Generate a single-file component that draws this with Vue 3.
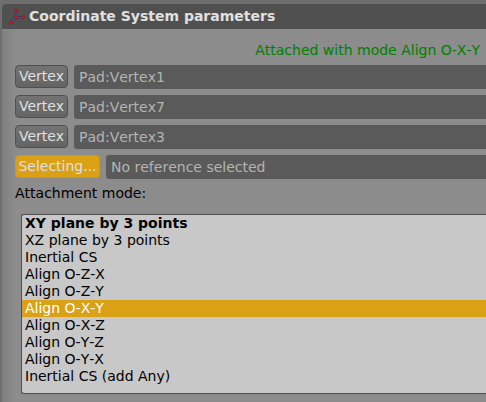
<script setup>
import { ref } from 'vue'

const references = [
  { button: 'Vertex', value: 'Pad:Vertex1' },
  { button: 'Vertex', value: 'Pad:Vertex7' },
  { button: 'Vertex', value: 'Pad:Vertex3' },
  { button: 'Selecting...', value: 'No reference selected', active: true },
]
const modes = [
  'XY plane by 3 points',
  'XZ plane by 3 points',
  'Inertial CS',
  'Align O-Z-X',
  'Align O-Z-Y',
  'Align O-X-Y',
  'Align O-X-Z',
  'Align O-Y-Z',
  'Align O-Y-X',
  'Inertial CS (add Any)',
]
const selected = ref('Align O-X-Y')
</script>

<template>
  <div class="window">
    <section class="panel">
      <header class="title">
        <svg class="icon" width="16" height="16" viewBox="0 0 16 16">
          <path d="M7 8.2V2M7 8.2H14M7 8.2L2 13.5" stroke="#1b2e4c" stroke-width="2" fill="none" />
          <path d="M7 8.2V2M7 8.2H14M7 8.2L2 13.5" stroke="#3a6fb4" stroke-width="1.1" fill="none" />
          <g fill="#e01c1c" stroke="#6e1212" stroke-width=".5">
            <circle cx="7" cy="1.8" r="1.6" />
            <circle cx="7" cy="8.2" r="1.6" />
            <circle cx="14" cy="8.2" r="1.6" />
            <circle cx="2" cy="13.5" r="1.6" />
          </g>
        </svg>
        <span>Coordinate System parameters</span>
      </header>
      <div class="body">
        <p class="status">Attached with mode Align O-X-Y</p>
        <div class="rows">
          <div v-for="(r, i) in references" :key="i" class="row">
            <button class="pick" :class="{ active: r.active }">{{ r.button }}</button>
            <div class="field">{{ r.value }}</div>
          </div>
        </div>
        <p class="label">Attachment mode:</p>
        <ul class="list">
          <li
            v-for="(m, i) in modes"
            :key="m"
            :class="{ suggested: i === 0, selected: m === selected }"
            @click="selected = m"
          >{{ m }}</li>
        </ul>
      </div>
    </section>
  </div>
</template>

<style>
body { overflow: hidden; }
</style>

<style scoped>
.window {
  box-sizing: border-box;
  width: 486px;
  height: 402px;
  padding: 4px 0 0 2px;
  overflow: hidden;
  background: #6e6e6e;
  font: 14px/17px "DejaVu Sans", sans-serif;
  font-kerning: none;
  white-space: nowrap;
  color: #000;
}
.panel {
  height: 398px;
  border-radius: 4px 0 0 0;
  overflow: hidden;
  background: linear-gradient(90deg, #808080, #8c8c8c 14px);
}
.title {
  display: flex;
  align-items: center;
  gap: 4px;
  height: 25px;
  padding-left: 7px;
  background: #505050;
  color: #e0e0e0;
  font-weight: bold;
}
.icon { flex: none; }
.body { padding: 13px 0 0 13px; }
p { margin: 0; }
.status {
  padding-right: 6px;
  text-align: right;
  color: #008000;
}
.rows {
  display: grid;
  gap: 6px;
  margin-top: 6px;
}
.row {
  display: flex;
  align-items: flex-start;
  gap: 6px;
  height: 24px;
}
.pick {
  box-sizing: border-box;
  width: 53px;
  height: 23px;
  padding: 0 0 1px;
  border: 1px solid #505050;
  border-radius: 4px;
  background: linear-gradient(#737373, #646464);
  color: #e0e0e0;
  font: inherit;
  font-kerning: normal;
}
.pick.active {
  width: 85px;
  border-color: #d1961a;
  background: #daa016;
}
.field {
  flex: 1;
  height: 24px;
  padding-left: 5px;
  border-radius: 3px 0 0 3px;
  background: #5a5a5a;
  color: #b4b4b4;
  line-height: 24px;
}
.label { margin-top: 6px; }
.list {
  height: 178px;
  margin: 12px 0 0 6px;
  padding: 0;
  border: 1px solid #505050;
  border-right: 0;
  border-radius: 3px 0 0 3px;
  background: #c8c8c8;
  list-style: none;
}
.list li {
  height: 17px;
  padding-left: 3px;
}
.suggested { font-weight: bold; }
.list .selected { background: #daa016; color: #fff; }
</style>
